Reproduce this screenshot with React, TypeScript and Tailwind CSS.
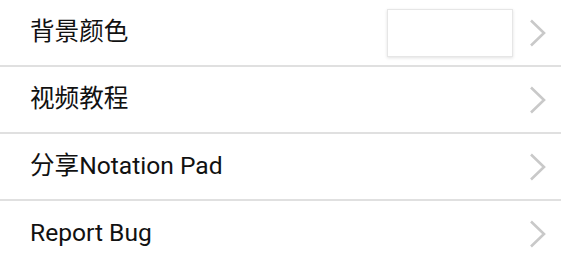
import { useState } from "react";

type Row = { id: string; label: string; color?: string };

const rows: Row[] = [
  { id: "bg", label: "背景颜色", color: "#ffffff" },
  { id: "video", label: "视频教程" },
  { id: "share", label: "分享Notation Pad" },
  { id: "bug", label: "Report Bug" },
];

function Chevron() {
  return (
    <svg width="18" height="30" viewBox="0 0 18 30" className="shrink-0">
      <path d="M2 2.5 L15 15 L2 27.5" fill="none" stroke="#c9c9c9" strokeWidth="2.6" />
    </svg>
  );
}

export default function App() {
  const [bgColor] = useState("#ffffff");

  return (
    <div
      className="w-[561px] h-[266px] bg-white overflow-hidden"
      style={{ fontFamily: 'Roboto, "Noto Sans CJK SC", sans-serif' }}
    >
      {rows.map((row, i) => (
        <div key={row.id}>
          {i > 0 && <div className="h-[2px] bg-[#e0e0e0]" />}
          <div className="h-[65px] flex items-center pl-[30px] pr-[14px]">
            <span className="flex-1 text-[24.6px] text-[#111111] leading-none">{row.label}</span>
            {row.color && (
              <div
                className="w-[126px] h-[48px] mr-[16px] border border-[#e6e6e6] shadow-[0_1px_3px_rgba(0,0,0,0.12)]"
                style={{ backgroundColor: bgColor }}
              />
            )}
            <Chevron />
          </div>
        </div>
      ))}
    </div>
  );
}
